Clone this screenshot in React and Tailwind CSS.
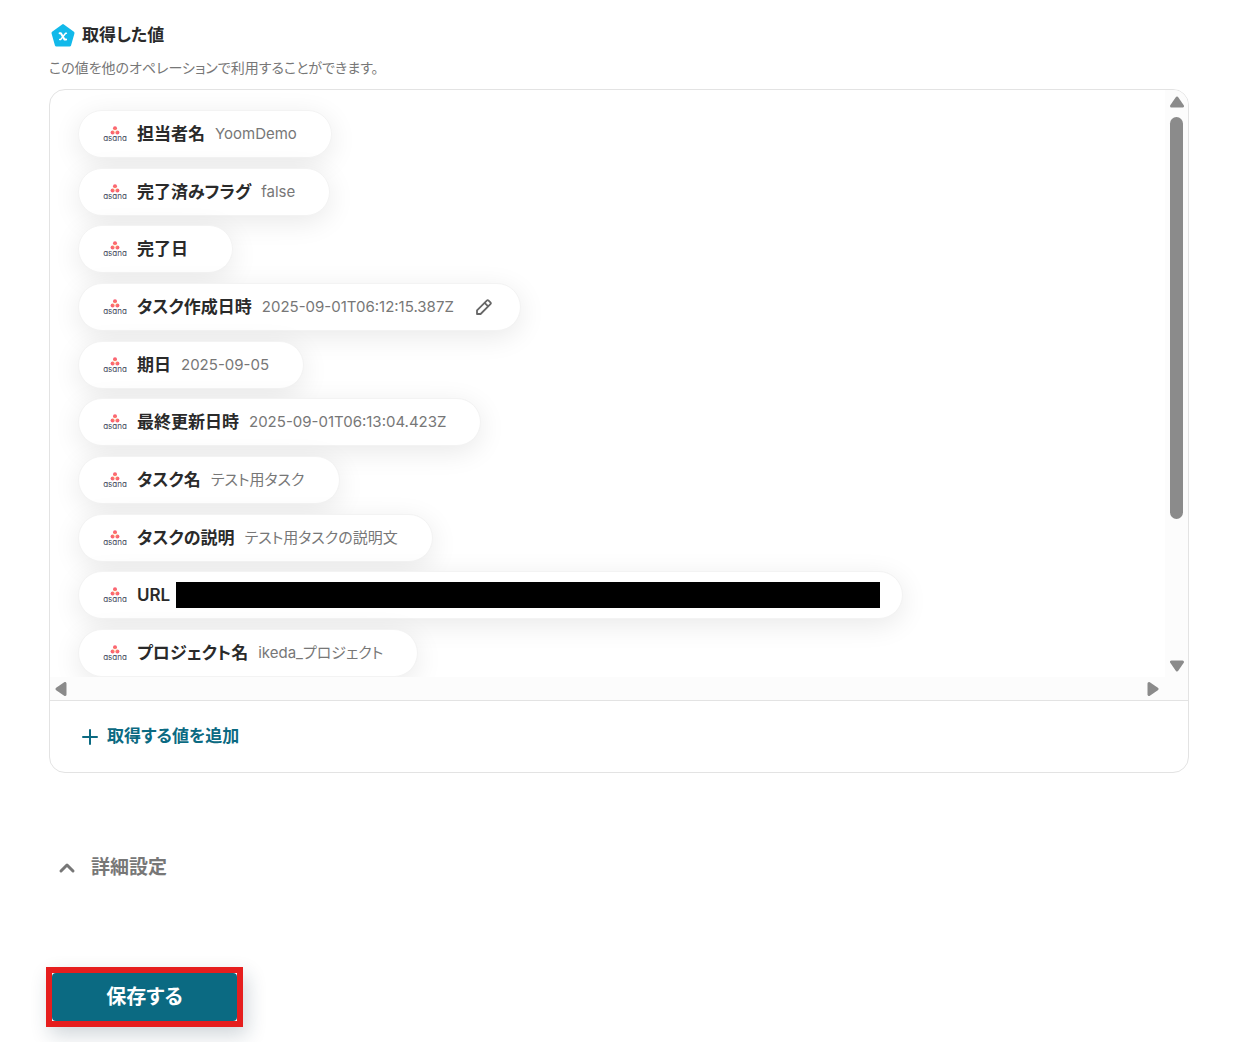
import clsx from 'clsx';
import { Plus, ChevronUp } from 'lucide-react';

const OUTPUTS = [
  { label: '担当者名', value: 'YoomDemo' },
  { label: '完了済みフラグ', value: 'false' },
  { label: '完了日', value: '' },
  { label: 'タスク作成日時', value: '2025-09-01T06:12:15.387Z', editable: true },
  { label: '期日', value: '2025-09-05' },
  { label: '最終更新日時', value: '2025-09-01T06:13:04.423Z' },
  { label: 'タスク名', value: 'テスト用タスク' },
  { label: 'タスクの説明', value: 'テスト用タスクの説明文' },
  { label: 'URL', masked: true },
  { label: 'プロジェクト名', value: 'ikeda_プロジェクト' },
];

function AsanaLogo() {
  return (
    <svg className="h-4 w-6 shrink-0 overflow-visible" viewBox="0 0 24 16" aria-hidden="true">
      <defs>
        <radialGradient id="asana-dots" gradientUnits="userSpaceOnUse" cx="12" cy="5" r="5">
          <stop offset="0" stopColor="#fda35c" />
          <stop offset="0.6" stopColor="#fb6572" />
          <stop offset="1" stopColor="#f95d72" />
        </radialGradient>
      </defs>
      <g fill="url(#asana-dots)">
        <circle cx="12" cy="2.2" r="2" />
        <circle cx="9.6" cy="6.4" r="2" />
        <circle cx="14.4" cy="6.4" r="2" />
      </g>
      <text x="12" y="15" textAnchor="middle" className="fill-[#3f4759] font-['Inter',sans-serif] text-[8px] font-normal [font-feature-settings:'cv11']">asana</text>
    </svg>
  );
}

function ValueIcon() {
  return (
    <svg className="size-6 shrink-0" viewBox="0 0 24 24" aria-hidden="true">
      <path d="M12 2.6 22 10 18.6 22H5.4L2 10Z" fill="#12b9ea" stroke="#12b9ea" strokeWidth="3" strokeLinejoin="round" />
      <g fill="none" stroke="#fff" strokeLinecap="round" strokeLinejoin="round">
        <path d="M8.6 10.2h1.3l3.6 6.4h1.6" strokeWidth="2" />
        <path d="M15.4 10.2h-.8l-5 6.4h-.9" strokeWidth="1.5" />
      </g>
    </svg>
  );
}

function PencilIcon() {
  return (
    <svg className="size-4" viewBox="0 0 16 16" fill="none" stroke="#666" strokeWidth="1.8" strokeLinejoin="round" aria-hidden="true">
      <path d="M1 15v-3.6L10.8 1.6q.9-.9 1.8 0l1.8 1.8q.9.9 0 1.8L4.6 15Z" />
      <path d="m8.6 3.8 3.6 3.6" />
    </svg>
  );
}

function Arrow({ className }) {
  return (
    <svg className={clsx('h-3 w-[14px]', className)} viewBox="0 0 14 12" aria-hidden="true">
      <path d="M7 2 12.5 10H1.5Z" fill="#8b8b8b" stroke="#8b8b8b" strokeWidth="3" strokeLinejoin="round" />
    </svg>
  );
}

function OutputPill({ label, value, editable, masked }) {
  return (
    <li
      className={clsx(
        'flex h-12 items-center rounded-full border border-[#f3f3f3] bg-white pl-6 shadow-[0_6px_28px_rgba(0,0,0,0.09)]',
        masked ? 'pr-[22px]' : editable ? 'pr-7' : 'pr-[34px]'
      )}
    >
      <AsanaLogo />
      <span className="ml-[10px] text-[17px] leading-6 font-semibold whitespace-nowrap text-[#2a2a2a]">{label}</span>
      {masked ? (
        <span className="ml-[6px] h-[26px] w-[704px] bg-black" />
      ) : (
        <span className="ml-[10px] text-[15px] leading-6 whitespace-nowrap text-[#777]">{value}</span>
      )}
      {editable && (
        <button type="button" aria-label="編集" className="ml-[22px]">
          <PencilIcon />
        </button>
      )}
    </li>
  );
}

export default function App() {
  return (
    <main className="bg-white pt-[22px] pr-[69px] pb-4 pl-[49px] font-['Inter','Noto_Sans_CJK_JP',sans-serif] [font-feature-settings:'palt']">
      <header>
        <div className="flex items-center gap-[7px] pl-[2px]">
          <ValueIcon />
          <h2 className="text-[17px] leading-[26px] font-semibold text-[#2a2a2a]">取得した値</h2>
        </div>
        <p className="mt-[10px] text-[14px] leading-5 text-[#777]">この値を他のオペレーションで利用することができます。</p>
      </header>

      <section className="mt-[11px] overflow-hidden rounded-2xl border border-[#e3e3e3]">
        <div className="flex">
          <ul className="flex h-[587px] min-w-0 flex-1 flex-col items-start justify-between overflow-hidden pt-5 pl-7">
            {OUTPUTS.map((item) => (
              <OutputPill key={item.label} {...item} />
            ))}
          </ul>
          <div className="flex w-[23px] flex-col items-center bg-[#fcfcfc] pt-[6px] pb-[5px]">
            <Arrow />
            <div className="mt-[9px] h-[402px] w-[13px] rounded-full bg-[#8b8b8b]" />
            <Arrow className="mt-auto rotate-180" />
          </div>
        </div>
        <div className="flex h-[23px] items-center justify-between bg-[#fcfcfc] pr-7 pl-1">
          <Arrow className="-rotate-90" />
          <Arrow className="rotate-90" />
        </div>
        <div className="border-t border-[#e3e3e3] px-7 py-[22px]">
          <button type="button" className="flex items-center gap-[5px] text-[17px] leading-[27px] font-semibold text-[#0b6a82]">
            <Plus className="size-6" strokeWidth={2} />
            取得する値を追加
          </button>
        </div>
      </section>

      <button type="button" className="mt-20 ml-[6px] flex items-center gap-3 text-[19px] leading-[30px] font-semibold text-[#777]">
        <ChevronUp className="size-6" strokeWidth={3} />
        詳細設定
      </button>

      <div className="mt-[84px] -ml-[3px] inline-block border-[6px] border-[#e61e1e] bg-white shadow-[4px_8px_20px_rgba(20,50,70,0.2)]">
        <button type="button" className="block h-12 w-[185px] rounded bg-[#0b6a82] text-[20px] font-bold text-white">
          保存する
        </button>
      </div>
    </main>
  );
}
